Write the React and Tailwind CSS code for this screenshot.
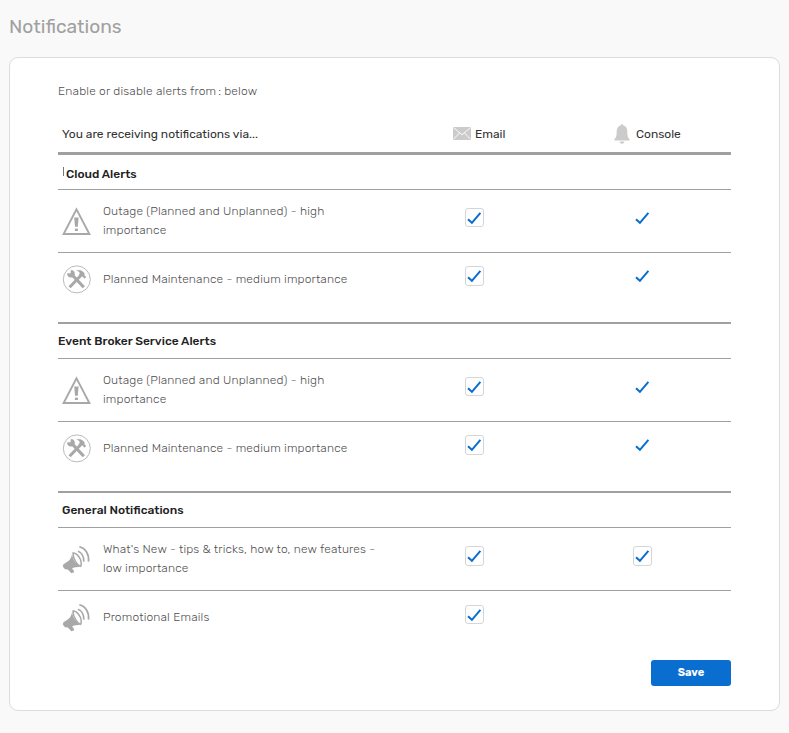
import React from "react";

const Check = () => (
  <svg className="block h-[19px] w-[19px]" viewBox="0 0 19 19" fill="none" stroke="#0a6ed1" strokeWidth="2">
    <path d="M3 11.3 L6.9 14.8 L15.4 4.8" />
  </svg>
);

const CheckBox = ({ tall }) => (
  <span className={`relative block w-[19px] rounded-[3px] border border-[#d5d5d5] ${tall ? "h-[20px]" : "h-[19px]"}`}>
    <span className="absolute -left-px -top-px">
      <Check />
    </span>
  </span>
);

const Warning = () => (
  <svg className="block h-[30px] w-[30px]" viewBox="0 0 30 30">
    <path d="M14.5 2.4 L27.4 27 H1.6 Z" fill="none" stroke="#a8a8a8" strokeWidth="1.9" />
    <path d="M12.2 10.4 H16.6 L15.8 19.8 H13 Z" fill="#a8a8a8" />
    <rect x="12.9" y="21.6" width="3" height="2.4" fill="#a8a8a8" />
  </svg>
);

const Tools = () => (
  <svg className="block h-[30px] w-[30px]" viewBox="0 0 30 30" fill="none" stroke="#a8a8a8">
    <circle cx="14.8" cy="15.4" r="13.5" strokeWidth="0.8" />
    <path d="M10.6 11.4 L21.8 23.2" strokeWidth="3.1" />
    <path d="M18.6 11.8 L7.6 23.2" strokeWidth="3" />
    <path d="M9 6.2 L8.8 9.4 L5.4 9.4 C5 12 7 13.8 10 13.2 L12.6 10.8 C13 8 11.4 6 9 6.2 Z" fill="#a8a8a8" strokeWidth="0.4" />
    <path d="M14.8 6.4 C18 5.6 20.6 6.8 22.2 9 L22.4 11.2 L24 13 L22.6 14.4 L20.6 12.6 L18.8 12.6 L17 10.8 L18 9.2 C17.2 7.6 16.4 7 14.8 6.4 Z" fill="#a8a8a8" strokeWidth="0.3" />
  </svg>
);

const Megaphone = () => (
  <svg className="block h-[30px] w-[30px]" viewBox="0 0 30 30" fill="none" stroke="#a8a8a8">
    <path d="M10 8.8 C9.8 13 7.6 16.2 1.4 19.2 L0.8 21.4 L3 24.2 L5.8 24.4 L9.4 28.2 L12.2 27.2 L11.6 25.2 L10 23.4 C12.4 22 15.5 22 18.4 22 C14 19.4 10.6 14.4 10 8.8 Z" fill="#a8a8a8" stroke="none" />
    <path d="M11 8 C13.2 7.4 17 10.6 18.5 14.6 C19.4 17.6 19.6 19.8 18.6 21.4 C15.6 20.6 10.8 14 11 8 Z" strokeWidth="1.5" />
    <path d="M16 6.2 C19.4 7.4 22 11.4 21.8 16.6" strokeWidth="1.7" />
    <path d="M17.4 1.8 C23.4 3 27.4 9.4 26.5 16.6" strokeWidth="1.7" />
  </svg>
);

const Mail = () => (
  <svg className="block h-[13px] w-[18px]" viewBox="0 0 18 13">
    <rect width="18" height="13" fill="#cbcbcb" />
    <path d="M0.4 0.5 L9 7.8 L17.6 0.5 M0.4 12.4 L6.4 6 M17.6 12.4 L11.6 6" fill="none" stroke="#fff" strokeWidth="0.9" />
  </svg>
);

const Bell = () => (
  <svg className="block h-[20px] w-[16px]" viewBox="0 0 16 20" fill="#cbcbcb">
    <path d="M6.6 1.4 C6.6 -0.3 9.4 -0.3 9.4 1.4 C12.2 2.2 13.3 4.4 13.3 7 C13.3 11.5 13.6 13.4 15.6 15.2 V16.6 H0.4 V15.2 C2.4 13.4 2.7 11.5 2.7 7 C2.7 4.4 3.8 2.2 6.6 1.4 Z" />
    <path d="M5.6 17.4 H10.4 C10.2 20.4 5.8 20.4 5.6 17.4 Z" />
  </svg>
);

const Row = ({ icon, lines, height, iconTop, textTop, checkTop, tall, console: cons }) => (
  <div className={`flex items-start ${height}`}>
    <div className={`w-[45px] pl-1 ${iconTop}`}>{icon}</div>
    <div className={`w-[362px] text-[12px] font-light leading-[19px] tracking-[0.15px] text-[#505050] ${textTop}`}>
      {lines.map((l) => (
        <div key={l}>{l}</div>
      ))}
    </div>
    <div className={`w-[168px] ${checkTop}`}><CheckBox tall={tall} /></div>
    <div className={checkTop}>
      {cons === "box" && <CheckBox tall />}
      {cons === "plain" && <Check />}
    </div>
  </div>
);

const Alerts = () => (
  <>
    <Row
      icon={<Warning />}
      lines={["Outage (Planned and Unplanned) - high", "importance"]}
      height="h-[63px] border-b border-[#a0a0a0]"
      iconTop="pt-[17px]" textTop="pt-[12px]" checkTop="pt-[18px]" console="plain"
    />
    <Row
      icon={<Tools />}
      lines={["Planned Maintenance - medium importance"]}
      height="h-[69px]"
      iconTop="pt-[11px]" textTop="pt-[17px]" checkTop="pt-[13px]" console="plain" tall
    />
  </>
);

export default function App() {
  return (
    <main className="h-[733px] w-[789px] overflow-hidden bg-[#f9f9f9] px-[9px] font-['Rubik','Roboto',sans-serif]">
      <h1 className="h-[57px] pt-[15px] text-[19.2px] leading-6 text-[#a0a0a0]">Notifications</h1>
      <section className="h-[654px] w-[771px] rounded-[9px] border border-[#dcdcdc] bg-white px-12">
        <p className="h-[62px] pt-[23px] text-[12px] font-light leading-5 text-[#505050]"><span className="tracking-[0.17px]">Enable or disable alerts from</span><span className="ml-[2px] mr-[3px]">:</span><span className="tracking-[0.17px]">below</span></p>
        <div className="flex h-[35px] w-[673px] items-start border-b-[3px] border-[#a0a0a0] text-[12px] leading-5 text-[#333]">
          <div className="w-[395px] pl-1 pt-1">You are receiving notifications via...</div>
          <div className="flex w-[161px] pt-1"><span className="mr-1 pt-[3px]"><Mail /></span>Email</div>
          <div className="flex pt-1"><span className="mr-[6px]"><Bell /></span>Console</div>
        </div>
        <div className="w-[673px]">
          <h2 className="flex h-[35px] items-start border-b border-[#a0a0a0] pl-1 pt-[9px] text-[12px] font-medium leading-5 text-[#222]">
            <span className="ml-px mt-[3px] h-[9px] w-px bg-[#777]" />
            <span className="ml-[2px]">Cloud Alerts</span>
          </h2>
          <Alerts />
          <h2 className="h-[37px] border-b border-t-2 border-[#a0a0a0] pt-[7px] text-[12px] font-medium leading-5 text-[#222]">Event Broker Service Alerts</h2>
          <Alerts />
          <h2 className="h-[37px] border-b border-t-2 border-[#a0a0a0] pl-1 pt-[7px] text-[12px] font-medium leading-5 text-[#222]">General Notifications</h2>
          <Row
            icon={<Megaphone />}
            lines={["What's New - tips & tricks, how to, new features -", "low importance"]}
            height="h-[63px] border-b border-[#a0a0a0]"
            iconTop="pt-[17px]" textTop="pt-[12px]" checkTop="pt-[18px]" console="box" tall
          />
          <Row
            icon={<Megaphone />}
            lines={["Promotional Emails"]}
            height="h-[69px]"
            iconTop="pt-[12px]" textTop="pt-[17px]" checkTop="pt-[14px]"
          />
          <div className="flex justify-end">
            <button className="h-[26px] w-[80px] rounded-[3px] bg-[#0a6ed1] text-[11px] font-bold leading-6 text-white">Save</button>
          </div>
        </div>
      </section>
    </main>
  );
}
